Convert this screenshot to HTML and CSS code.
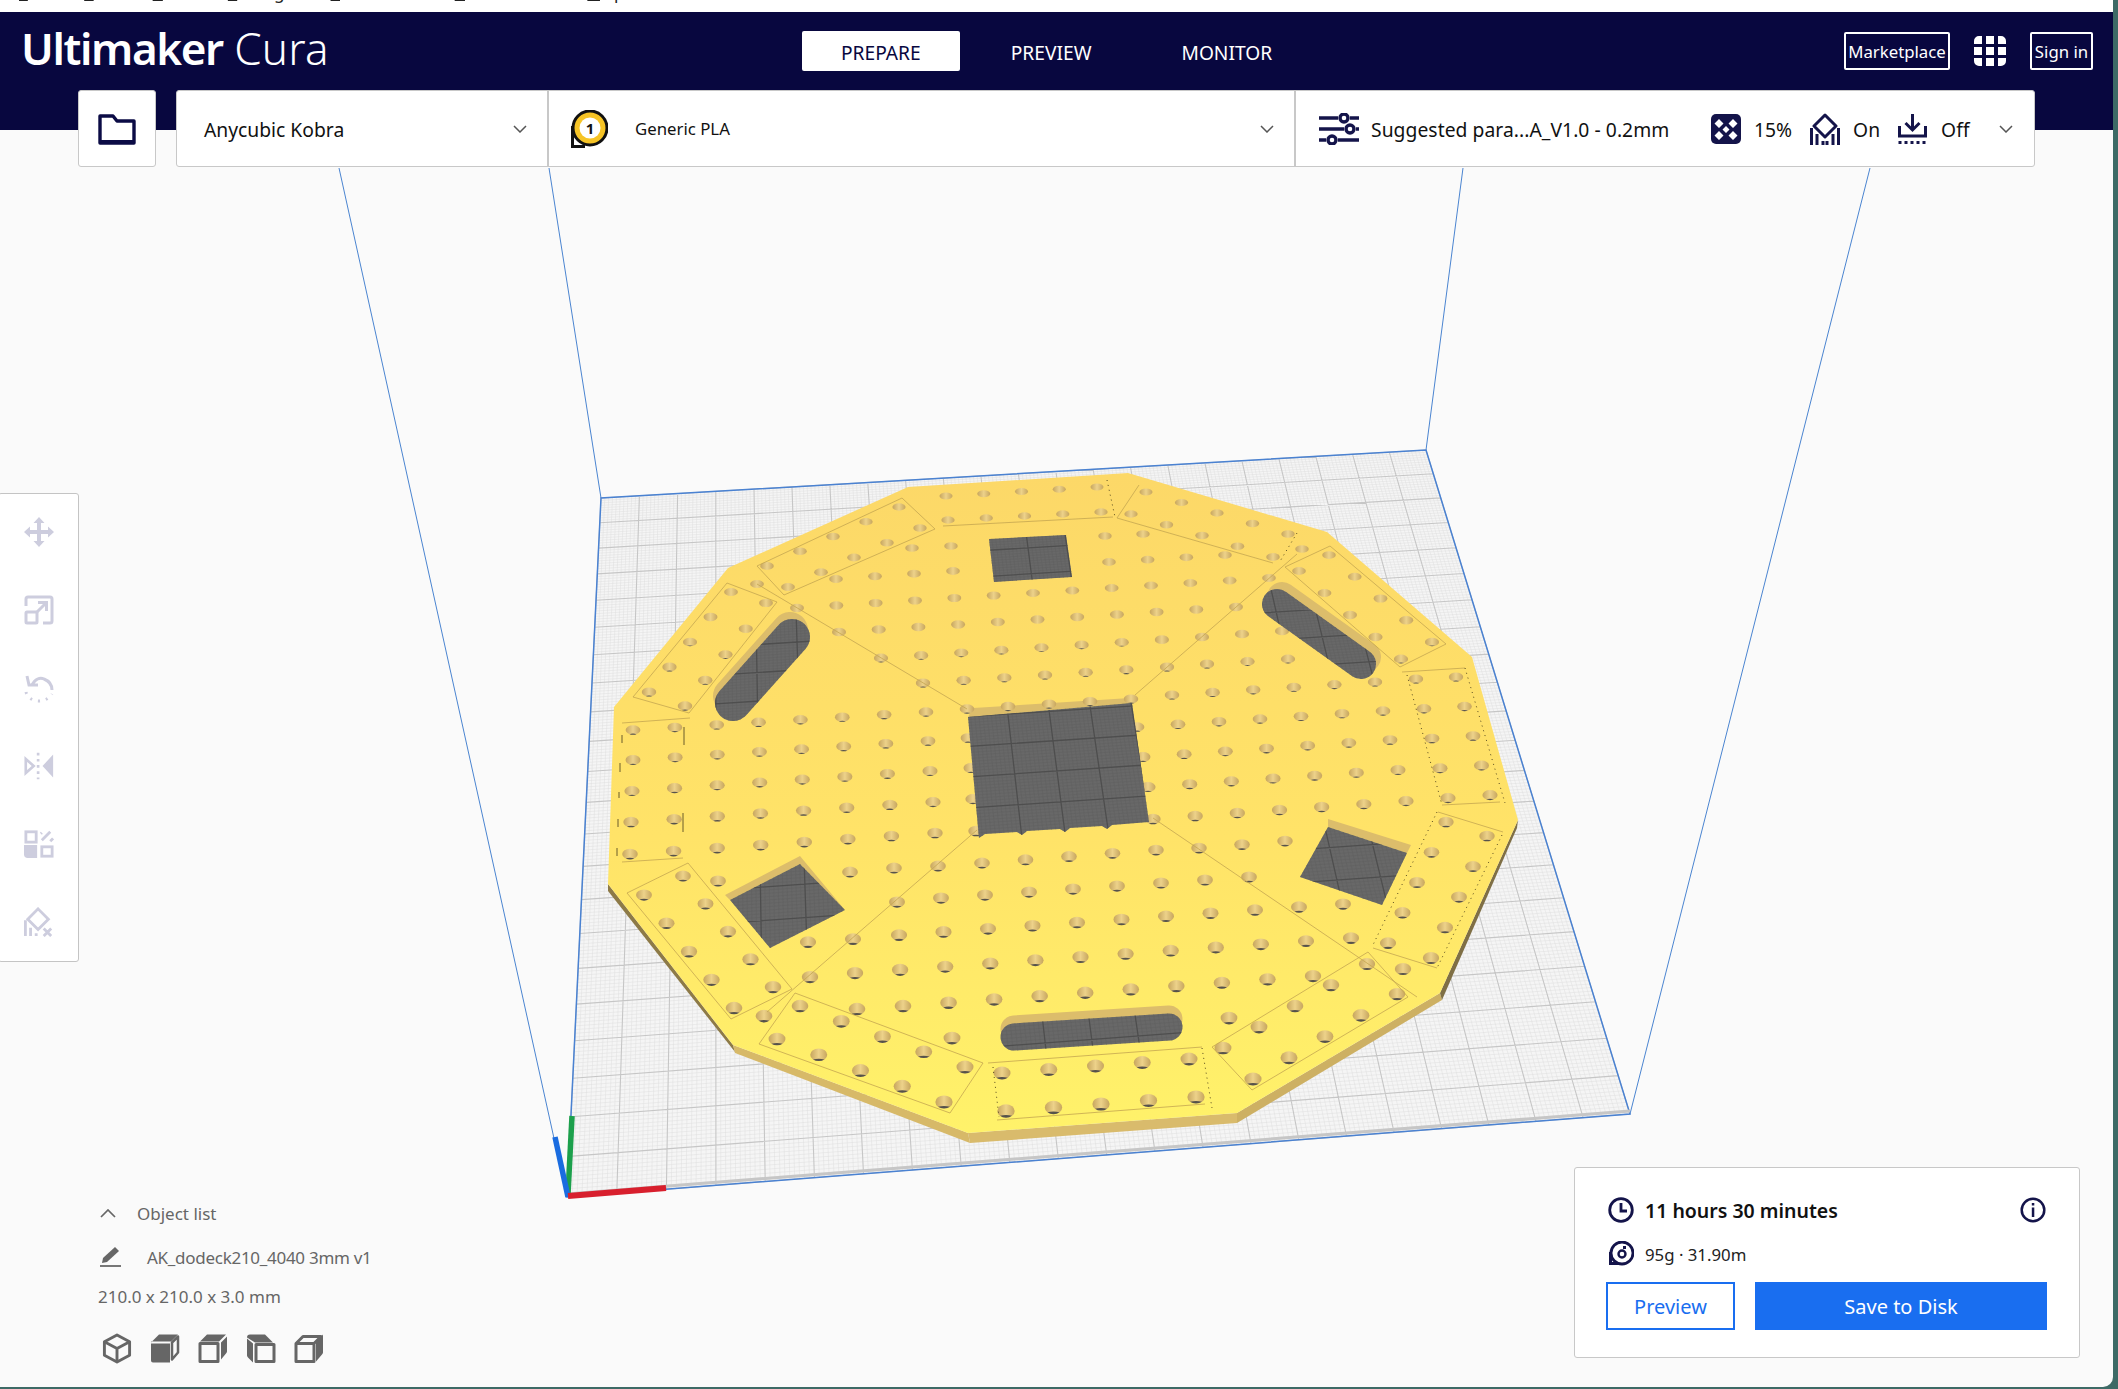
FILE: index.html
```html
<!DOCTYPE html>
<html lang="en">
<head>
  <meta charset="UTF-8">
  <title>Ultimaker Cura</title>
  <link rel="stylesheet" href="styles.css">
</head>
<body>
  <div class="app">
    <svg id="scene" class="scene" viewBox="0 0 2113 1387"></svg>

    <nav class="menu">
      <span><u>F</u>ile</span>
      <span><u>E</u>dit</span>
      <span><u>V</u>iew</span>
      <span><u>S</u>ettings</span>
      <span><u>E</u>xtensions</span>
      <span><u>P</u>references</span>
      <span><u>H</u>elp</span>
    </nav>

    <header class="topbar">
      <div class="topbar-row">
        <div class="logo"><b>Ultimaker</b> <i>Cura</i></div>
        <div class="tabs">
          <button class="tab active">PREPARE</button>
          <button class="tab">PREVIEW</button>
          <button class="tab">MONITOR</button>
        </div>
        <div class="account">
          <button class="outline-btn market">Marketplace</button>
          <svg class="apps" viewBox="0 0 32 30">
            <path fill="#fff" d="M0 5a5 5 0 0 1 5-5h3v8H0zM12 0h8v8h-8zM24 0h3a5 5 0 0 1 5 5v3h-8zM0 11h8v8H0zM12 11h8v8h-8zM24 11h8v8h-8zM0 22h8v8H5a5 5 0 0 1-5-5zM12 22h8v8h-8zM24 22h8v3a5 5 0 0 1-5 5h-3z"/>
          </svg>
          <button class="outline-btn signin">Sign in</button>
        </div>
      </div>

      <div class="toolbar">
        <button class="open-btn">
          <svg class="folder" viewBox="0 0 38 32">
            <path fill="none" stroke="#0b0b45" stroke-width="3.4" stroke-linejoin="round" d="M2 3h13l4 5h17v22H2z"/>
            <path fill="#0b0b45" d="M2 27h34v4H2z"/>
          </svg>
        </button>
        <div class="stage-menu">
          <div class="cell printer">
            <span>Anycubic Kobra</span>
            <svg class="chev" viewBox="0 0 14 8"><path d="M1 1l6 6 6-6"/></svg>
          </div>
          <div class="cell material">
            <svg class="badge" viewBox="0 0 38 38">
              <circle cx="20" cy="18" r="17" fill="#f6c426" stroke="#111" stroke-width="3"/>
              <circle cx="20" cy="18" r="10.5" fill="#fff"/>
              <path fill="#111" d="M1 38V16h3v22z"/>
              <path fill="#111" d="M1 35h14v3H1z"/>
              <text x="20" y="23.5" class="badge-num">1</text>
            </svg>
            <span>Generic PLA</span>
            <svg class="chev" viewBox="0 0 14 8"><path d="M1 1l6 6 6-6"/></svg>
          </div>
          <div class="cell settings">
            <svg class="ic-sliders" viewBox="0 0 40 32">
              <g fill="none" stroke="#14144a" stroke-width="3.4">
                <path d="M0 5h19M31 5h9M0 16h25M37 16h3M0 27h7M19 27h21"/>
                <circle cx="25" cy="5" r="4"/>
                <circle cx="31" cy="16" r="4"/>
                <circle cx="13" cy="27" r="4"/>
              </g>
            </svg>
            <span class="profile">Suggested para...A_V1.0 - 0.2mm</span>
            <svg class="ic-infill" viewBox="0 0 30 30">
              <rect width="30" height="30" rx="5" fill="#14144a"/>
              <path fill="#fff" d="M15 12l3.500 3.500-3.500 3.500-3.500-3.500zM8 5l4.500 4.500L8 14l-4.500-4.500zM22 5l4.500 4.500L22 14l-4.500-4.500zM8 17l4.500 4.500L8 26l-4.500-4.500zM22 17l4.500 4.500L22 26l-4.500-4.500z"/>
            </svg>
            <span class="val val-pct">15%</span>
            <svg class="ic-support" viewBox="0 0 30 32">
              <path fill="none" stroke="#14144a" stroke-width="3" stroke-linejoin="round" d="M15 2l11 11-11 11L4 13z"/>
              <path fill="none" stroke="#14144a" stroke-width="3" d="M1.500 32V15M7 32V21M13 32v-4M17 32v-4M23 32V21M28.500 32V15"/>
            </svg>
            <span class="val val-on">On</span>
            <svg class="ic-adhesion" viewBox="0 0 30 30">
              <path fill="none" stroke="#14144a" stroke-width="3" d="M15 0v15M8 9l7 7 7-7M2 12v10h26V12"/>
              <path fill="none" stroke="#14144a" stroke-width="3" stroke-dasharray="3 3" d="M1 28.500h28"/>
            </svg>
            <span class="val val-off">Off</span>
            <svg class="chev" viewBox="0 0 14 8"><path d="M1 1l6 6 6-6"/></svg>
          </div>
        </div>
      </div>
    </header>

    <aside class="tools">
      <svg class="tool" viewBox="0 0 30 30"><path d="M15 0l5.500 6H17v7h7V9.500l6 5.500-6 5.500V17h-7v7h3.500L15 30l-5.500-6H13v-7H6v3.500L0 15l6-5.500V13h7V6H9.500z"/></svg>
      <svg class="tool" viewBox="0 0 30 30">
        <g class="tool-line">
          <path d="M2 11V4a2 2 0 0 1 2-2h22a2 2 0 0 1 2 2v22a2 2 0 0 1-2 2h-7"/>
          <rect x="2" y="17" width="11" height="11" rx="1"/>
          <path d="M12 18l10-10M14 7.500h8.500V16"/>
        </g>
      </svg>
      <svg class="tool" viewBox="0 0 30 30">
        <g class="tool-line">
          <path d="M8 12C11 6 16 4 20 6c5 2 8 6 8 11"/>
          <path d="M3 3l2 9h9"/>
          <path stroke-dasharray="2 6" d="M2 19c1 5 6 9 13 9s11-4 13-7"/>
        </g>
      </svg>
      <svg class="tool" viewBox="0 0 34 30">
        <path class="tool-line" d="M2 7l9 8-9 8z"/>
        <path d="M33 2v26L21 15z"/>
        <path class="tool-line" stroke-dasharray="3 4" d="M16 0v30"/>
      </svg>
      <svg class="tool" viewBox="0 0 32 30">
        <rect class="tool-line" x="2" y="2" width="11" height="11"/>
        <path class="tool-line" d="M19 11l9-9M19 3l-1 1M28 12l3-3"/>
        <path d="M0 16h14v14H4a4 4 0 0 1-4-4z"/>
        <rect class="tool-line" x="19" y="18" width="11" height="10"/>
      </svg>
      <svg class="tool" viewBox="0 0 32 32">
        <path class="tool-line" d="M15 2l11 11-11 11L4 13z"/>
        <path class="tool-line" d="M1.500 31V14M7 31v-9M13 31v-3"/>
        <path class="tool-line" d="M21 23l8 8M29 23l-8 8"/>
      </svg>
    </aside>

    <section class="objects">
      <div class="obj-row obj-head">
        <svg class="obj-chev" viewBox="0 0 16 9"><path d="M1 8l7-7 7 7"/></svg>
        <span>Object list</span>
      </div>
      <div class="obj-row obj-name">
        <svg class="obj-pencil" viewBox="0 0 22 21">
          <path fill="#666" d="M15 0l4 4L7 15l-5 1 1-5z"/>
          <path fill="#777" d="M0 18h21v2H0z"/>
        </svg>
        <span>AK_dodeck210_4040 3mm v1</span>
      </div>
      <div class="obj-size">210.0 x 210.0 x 3.0 mm</div>
      <div class="views">
        <svg class="view" viewBox="0 0 30 32">
          <g fill="none" stroke="#666" stroke-width="3" stroke-linejoin="round">
            <path d="M15 2l13 7v14l-13 7-13-7V9z"/>
            <path d="M2 9l13 7 13-7M15 16v14"/>
          </g>
        </svg>
        <svg class="view" viewBox="0 0 30 30">
          <path fill="#666" d="M1 9l8-8h19l-7 7H1zM1 10h19v19H3a2 2 0 0 1-2-2z"/>
          <path fill="none" stroke="#666" stroke-width="2.500" stroke-linejoin="round" d="M22 9l6-6v16l-6 7z"/>
        </svg>
        <svg class="view" viewBox="0 0 30 30">
          <path fill="none" stroke="#666" stroke-width="3" stroke-linejoin="round" d="M2 10h18v18H2z"/>
          <path fill="#666" d="M2 8l7-7h19l-7 7zM23 9l6-6v15a3 3 0 0 1-1 2l-5 6z"/>
        </svg>
        <svg class="view" viewBox="0 0 30 30">
          <path fill="none" stroke="#666" stroke-width="3" stroke-linejoin="round" d="M10 11h18v17H10z"/>
          <path fill="#666" d="M1 4a3 3 0 0 1 3-3h15l8 8H9zM7 10v19l-5-5a3 3 0 0 1-1-2V5z"/>
        </svg>
        <svg class="view" viewBox="0 0 30 30">
          <path fill="none" stroke="#666" stroke-width="3" stroke-linejoin="round" d="M2 10h18v18H2zM2 10l7-7h18l-7 7"/>
          <path fill="#666" d="M22 9l7-8v18a3 3 0 0 1-1 2l-6 7z"/>
        </svg>
      </div>
    </section>

    <section class="action">
      <div class="action-row time">
        <svg class="ic" viewBox="0 0 26 26">
          <circle cx="13" cy="13" r="11.300" fill="none" stroke="#14144a" stroke-width="2.800"/>
          <path fill="none" stroke="#14144a" stroke-width="2.800" d="M13 6v8h6"/>
        </svg>
        <span>11 hours 30 minutes</span>
        <svg class="ic info" viewBox="0 0 26 26">
          <circle cx="13" cy="13" r="11.300" fill="none" stroke="#14144a" stroke-width="2.500"/>
          <path fill="#14144a" d="M11.800 10.500h2.500V20h-2.500zM11.800 6h2.500v2.500h-2.500z"/>
        </svg>
      </div>
      <div class="action-row usage">
        <svg class="ic" viewBox="0 0 26 26">
          <circle cx="14" cy="12" r="11" fill="none" stroke="#14144a" stroke-width="2.800"/>
          <circle cx="14" cy="13" r="3.500" fill="none" stroke="#14144a" stroke-width="2.400"/>
          <path fill="#14144a" d="M1 24V11h3v10h7v3zM15 5h3v3h-3z"/>
        </svg>
        <span>95g · 31.90m</span>
      </div>
      <div class="action-btns">
        <button class="btn-preview">Preview</button>
        <button class="btn-save">Save to Disk</button>
      </div>
    </section>
  </div>
  <script src="scene.js"></script>
</body>
</html>
```

FILE: styles.css
```css
* {
  box-sizing: border-box;
}
body {
  margin: 0;
  background: #3d6a66;
  font-family: "Noto Sans", sans-serif;
}
button {
  font-family: inherit;
  cursor: pointer;
}
.app {
  position: relative;
  width: 2113px;
  height: 1387px;
  background: #fafafa;
  overflow: hidden;
  border-bottom-right-radius: 10px;
}
.scene {
  position: absolute;
  left: 0;
  top: 0;
  width: 2113px;
  height: 1387px;
}

/* window menu, cut off by the top of the shot */
.menu {
  position: relative;
  height: 12px;
  background: #fff;
  overflow: hidden;
  display: flex;
  gap: 38px;
  padding-left: 19px;
  font-size: 17px;
  line-height: 12px;
  color: #222;
}
.menu span {
  margin-top: -13px;
  white-space: nowrap;
}

.topbar {
  position: relative;
  height: 118px;
  background: #08073f;
}
.topbar-row {
  display: flex;
  height: 78px;
  padding-right: 20px;
}
.logo {
  width: 802px;
  padding: 6px 0 0 21px;
  font-size: 44px;
  line-height: 60px;
  color: #fff;
  white-space: nowrap;
}
.logo b {
  font-weight: 600;
  letter-spacing: -1.4px;
}
.logo i {
  font-style: normal;
  font-weight: 300;
  letter-spacing: 0.2px;
}
.tabs {
  display: flex;
  gap: 12px;
  padding-top: 19px;
}
.tab {
  height: 40px;
  padding: 2px 39px 0;
  border: 0;
  border-radius: 2px;
  background: transparent;
  color: #fff;
  font-size: 19.2px;
}
.tab.active {
  background: #fff;
  color: #08073f;
}
.account {
  display: flex;
  align-items: flex-start;
  gap: 24px;
  margin-left: auto;
  padding-top: 20px;
}
.outline-btn {
  height: 38px;
  padding: 0;
  border: 2px solid #fff;
  border-radius: 2px;
  background: transparent;
  color: #fff;
  font-size: 16.8px;
}
.market {
  width: 106px;
}
.signin {
  width: 63px;
}
.apps {
  width: 32px;
  height: 30px;
  margin-top: 4px;
}

.toolbar {
  display: flex;
  gap: 20px;
  padding-left: 78px;
  height: 77px;
}
.open-btn {
  width: 78px;
  height: 77px;
  padding: 0;
  border: 1.5px solid #c8c8c8;
  border-radius: 3px;
  background: #fff;
  display: flex;
  align-items: center;
  justify-content: center;
}
.folder {
  width: 38px;
  height: 32px;
}
.stage-menu {
  display: flex;
  width: 1859px;
  height: 77px;
  background: #fff;
  border: 1.5px solid #c8c8c8;
  border-radius: 3px;
  color: #111;
  font-size: 19.3px;
}
.cell {
  display: flex;
  align-items: center;
  white-space: nowrap;
}
.cell + .cell {
  border-left: 2px solid #c8c8c8;
}
.chev {
  width: 14px;
  height: 8px;
  fill: none;
  stroke: #555;
  stroke-width: 1.5;
}
.printer {
  width: 370px;
  padding-left: 27px;
}
.printer span,
.settings span {
  margin-top: 2px;
}
.printer .chev {
  margin-left: auto;
  margin-right: 20px;
}
.material {
  width: 747px;
  padding-left: 21px;
}
.badge {
  width: 38px;
  height: 38px;
}
.badge-num {
  font-size: 15px;
  font-weight: 700;
  text-anchor: middle;
  fill: #111;
}
.material span {
  margin-left: 27px;
  font-size: 16.8px;
}
.material .chev {
  margin-left: auto;
  margin-right: 20px;
}
.settings {
  flex: 1;
  padding-left: 23px;
}
.ic-sliders {
  width: 40px;
  height: 32px;
}
.profile {
  margin-left: 12px;
  width: 340px;
  letter-spacing: 0.05px;
}
.ic-infill {
  width: 30px;
  height: 30px;
}
.ic-support {
  width: 30px;
  height: 32px;
  margin-left: 18px;
}
.ic-adhesion {
  width: 31px;
  height: 30px;
  margin-left: 17px;
}
.val-pct {
  margin-left: 13px;
}
.val-on {
  margin-left: 13px;
}
.val-off {
  margin-left: 13px;
}
.settings .chev {
  margin-left: 30px;
}

/* floating panels over the build plate */
.tools {
  position: absolute;
  left: -2px;
  top: 493px;
  width: 81px;
  height: 469px;
  padding: 23px 0 24px;
  background: #fff;
  border: 1.5px solid #c4c4c4;
  border-radius: 3px;
  display: flex;
  flex-direction: column;
  align-items: center;
  justify-content: space-between;
}
.tool {
  width: 30px;
  height: 30px;
  fill: #cdcdde;
}
.tool-line {
  fill: none;
  stroke: #cdcdde;
  stroke-width: 3;
}

.objects {
  position: absolute;
  left: 98px;
  top: 1200px;
  width: 300px;
  color: #666;
  font-size: 17px;
}
.obj-row {
  display: flex;
  align-items: center;
  height: 26px;
}
.obj-chev {
  width: 16px;
  height: 9px;
  margin-left: 2px;
  fill: none;
  stroke: #666;
  stroke-width: 1.7;
}
.obj-head span {
  margin-left: 21px;
}
.obj-name {
  margin-top: 18px;
}
.obj-pencil {
  width: 22px;
  height: 21px;
  margin-left: 2px;
}
.obj-name span {
  margin-left: 25px;
  letter-spacing: -0.28px;
}
.obj-size {
  margin-top: 14px;
  line-height: 26px;
}
.views {
  display: flex;
  gap: 18px;
  margin: 23px 0 0 4px;
}
.view {
  width: 30px;
  height: 31px;
}

.action {
  position: absolute;
  left: 1574px;
  top: 1167px;
  width: 506px;
  height: 191px;
  padding: 28px 31px 0 31px;
  background: #fff;
  border: 1.5px solid #c8c8c8;
  border-radius: 3px;
}
.action-row {
  display: flex;
  align-items: center;
  height: 28px;
  padding: 0 2px 0 2px;
  gap: 11px;
}
.time {
  font-size: 19.5px;
  font-weight: 600;
  color: #111;
}
.usage {
  margin-top: 16px;
  font-size: 16.8px;
  color: #222;
}
.ic {
  width: 26px;
  height: 26px;
}
.info {
  margin-left: auto;
}
.action-btns {
  display: flex;
  gap: 20px;
  margin-top: 14px;
}
.btn-preview,
.btn-save {
  height: 48px;
  font-size: 20px;
  border-radius: 0;
}
.btn-preview {
  width: 129px;
  background: #fff;
  border: 2px solid #196ef0;
  color: #196ef0;
}
.btn-save {
  width: 292px;
  background: #196ef0;
  border: 0;
  color: #fff;
}
```

FILE: scene.js
```js
// Build plate and printed part, in screen pixels.
const BED = [[567, 1197], [1630, 1114], [1426, 450], [601, 498]];

function homography(q) {
  const [[x0, y0], [x1, y1], [x2, y2], [x3, y3]] = q;
  const dx1 = x1 - x2, dx2 = x3 - x2, sx = x0 - x1 + x2 - x3;
  const dy1 = y1 - y2, dy2 = y3 - y2, sy = y0 - y1 + y2 - y3;
  const det = dx1 * dy2 - dx2 * dy1;
  const g = (sx * dy2 - dx2 * sy) / det;
  const h = (dx1 * sy - sx * dy1) / det;
  const a = x1 - x0 + g * x1, b = x3 - x0 + h * x3;
  const d = y1 - y0 + g * y1, e = y3 - y0 + h * y3;
  return (u, v) => {
    const w = g * u + h * v + 1;
    return [(a * u + b * v + x0) / w, (d * u + e * v + y0) / w];
  };
}
const project = homography(BED);

function gridPath(test) {
  let d = '';
  for (let i = 0; i <= 220; i++) {
    if (!test(i)) continue;
    const t = i / 220;
    const a = project(t, 0), b = project(t, 1), c = project(0, t), e = project(1, t);
    d += `M${a[0].toFixed(1)} ${a[1].toFixed(1)}L${b[0].toFixed(1)} ${b[1].toFixed(1)}`;
    d += `M${c[0].toFixed(1)} ${c[1].toFixed(1)}L${e[0].toFixed(1)} ${e[1].toFixed(1)}`;
  }
  return d;
}
const fineGrid = gridPath(i => i % 10 !== 0);
const majorGrid = gridPath(i => i % 10 === 0);

const pts = a => a.map(p => p.join(',')).join(' ');

// evenly spaced holes between two end holes
const holes = [];
function row(x0, y0, x1, y1, n) {
  for (let i = 0; i < n; i++) {
    const t = n > 1 ? i / (n - 1) : 0;
    holes.push([x0 + (x1 - x0) * t, y0 + (y1 - y0) * t]);
  }
}
function single(...list) {
  list.forEach(p => holes.push(p));
}

// left panel
row(633, 730, 926, 712, 8);
row(633, 760, 928, 741, 8);
row(632, 791, 930, 771, 8);
row(631, 822, 933, 802, 8);
row(630, 854, 935, 833, 8);
single([968, 738], [971, 768], [973, 799], [976, 831]);
single([718, 881], [850, 872], [894, 868], [938, 866], [897, 902], [808, 942], [853, 939], [810, 977]);
// top panel
row(967, 709, 1131, 699, 5);
row(923, 683, 1167, 667, 7);
row(881, 658, 1202, 637, 9);
row(839, 632, 1236, 607, 11);
row(797, 608, 1269, 578, 13);
row(836, 579, 953, 571, 4);
row(1109, 562, 1225, 555, 4);
single([912, 548], [951, 546], [1105, 536], [1143, 534]);
// right panel
row(1242, 634, 1282, 631, 2);
row(1207, 664, 1288, 659, 3);
row(1172, 695, 1375, 682, 6);
row(1137, 727, 1383, 711, 7);
row(1143, 757, 1390, 740, 7);
row(1148, 787, 1398, 770, 7);
row(1153, 819, 1406, 801, 7);
row(1199, 848, 1285, 841, 3);
single([1249, 877], [1299, 907], [1343, 904], [1351, 938], [1403, 969]);
// bottom panel
row(982, 863, 1156, 850, 5);
row(941, 898, 1205, 880, 7);
row(899, 935, 1255, 910, 9);
row(855, 973, 1306, 941, 11);
row(903, 1006, 1313, 976, 10);
single([857, 1009], [952, 1038], [1229, 1018]);
// edge strips, two rows of five
[
  [946, 496, 1097, 487], [948, 520, 1101, 512],
  [1146, 492, 1288, 534], [1131, 514, 1273, 557],
  [899, 507, 767, 566], [920, 528, 788, 587],
  [731, 592, 649, 692], [766, 603, 685, 706],
  [1329, 555, 1432, 642], [1299, 571, 1401, 659],
  [1416, 679, 1448, 798], [1456, 677, 1490, 795],
  [1446, 822, 1388, 943], [1487, 836, 1431, 958],
  [1367, 964, 1223, 1048], [1397, 994, 1253, 1079],
  [1002, 1073, 1189, 1059], [1006, 1111, 1196, 1097],
  [800, 1006, 965, 1067], [777, 1039, 944, 1102],
  [683, 876, 773, 987], [644, 895, 734, 1008]
].forEach(r => row(r[0], r[1], r[2], r[3], 5));
single([757, 584], [1302, 549], [764, 1016]);

function holeSvg([x, y]) {
  const k = (y - 480) / 640;
  const rx = 6.5 + 2.2 * k;
  const ry = 3.5 + 3.2 * k;
  let out = `<ellipse cx="${x}" cy="${y}" rx="${rx}" ry="${ry}" fill="url(#holeFill)"/>`;
  // the floor of the hole only shows from the front half of the plate
  if (k > 0.25) {
    const w = rx * (0.35 + 0.35 * k), h = ry * Math.sqrt(1 - (w / rx) ** 2);
    out += `<path d="M${x - w} ${y + h}A${rx} ${ry} 0 0 0 ${x + w} ${y + h}Q${x} ${y + ry * (0.75 - 0.3 * k)} ${x - w} ${y + h}Z" fill="#56524a"/>`;
  }
  return out;
}

// stadium shaped slot between two points
function slot(x1, y1, x2, y2, r, ox = 0, oy = 0) {
  const len = Math.hypot(x2 - x1, y2 - y1);
  const nx = -(y2 - y1) / len * r, ny = (x2 - x1) / len * r;
  x1 += ox; x2 += ox; y1 += oy; y2 += oy;
  return `M${x1 + nx} ${y1 + ny}L${x2 + nx} ${y2 + ny}A${r} ${r} 0 0 0 ${x2 - nx} ${y2 - ny}L${x1 - nx} ${y1 - ny}A${r} ${r} 0 0 0 ${x1 + nx} ${y1 + ny}Z`;
}

const plate = [[908, 487], [1128, 473], [1327, 532], [1472, 657], [1518, 820], [1440, 993], [1237, 1113], [968, 1133], [733, 1045], [608, 884], [614, 707], [728, 568]];

const sides = [
  [[[608, 884], [733, 1045], [735, 1052], [608, 891]], '#8d7a47'],
  [[[733, 1045], [968, 1133], [970, 1143], [735, 1053]], '#d7b968'],
  [[[968, 1133], [1237, 1113], [1237, 1123], [970, 1143]], '#d9bb6c'],
  [[[1237, 1113], [1440, 993], [1442, 1000], [1237, 1123]], '#cdb063'],
  [[[1440, 993], [1518, 820], [1517, 828], [1442, 1000]], '#7f6f45']
];

const central = 'M968 717L1132 703L1149 822L1112 825L1107 829L1102 826L1070 828L1065 832L1060 829L1027 831L1022 835L1017 832L985 834L979 838Z';
const topSquare = 'M989 539L1066 535L1072 577L994 582Z';
const squareBL = 'M800 864L845 910L770 948L730 900Z';
const squareR = 'M1328 827L1407 853L1382 905L1300 877Z';
const slots = [
  [733, 703, 792, 637, 18, -2, -7],
  [1277, 604, 1361, 664, 15, 5, -7],
  [1014, 1037, 1169, 1027, 13.500, 0, -8]
];
const slotPaths = slots.map(s => slot(s[0], s[1], s[2], s[3], s[4])).join('');
const cutouts = central + topSquare + squareBL + squareR + slotPaths;

const walls = [
  [[973, 708], [1130, 698], [1132, 703], [968, 717]],
  [[800, 856], [845, 910], [800, 864], [730, 900], [725, 895]],
  [[1328, 819], [1411, 845], [1407, 853], [1328, 827]]
];

// panel seams on the part
const seams = [
  [[727, 583], [777, 602], [689, 713], [633, 697], [727, 583]],
  [[902, 498], [935, 529], [784, 595], [757, 566], [902, 498]],
  [[757, 584], [967, 709]],
  [[943, 526], [1113, 517]],
  [[1139, 485], [1117, 518]],
  [[1117, 518], [1273, 563]],
  [[1297, 554], [1135, 695]],
  [[1285, 567], [1330, 546], [1446, 644], [1400, 667], [1285, 567]],
  [[1402, 672], [1465, 668]],
  [[1442, 805], [1500, 802]],
  [[1438, 812], [1503, 832]],
  [[1373, 948], [1437, 968]],
  [[1153, 818], [1417, 997]],
  [[1368, 952], [1408, 997], [1252, 1090], [1212, 1047], [1368, 952]],
  [[1202, 1047], [988, 1063]],
  [[1205, 1104], [997, 1120]],
  [[795, 993], [983, 1063]],
  [[950, 1113], [759, 1044], [795, 993]],
  [[983, 1063], [950, 1113]],
  [[977, 830], [767, 1012]],
  [[688, 863], [792, 989], [731, 1019], [627, 893], [688, 863]],
  [[622, 862], [683, 858]],
  [[622, 723], [690, 718]]
];
const dotted = [
  [[1107, 480], [1115, 517]],
  [[1297, 533], [1279, 563]],
  [[1407, 675], [1442, 805]],
  [[1465, 668], [1505, 803]],
  [[1437, 812], [1372, 947]],
  [[1502, 835], [1437, 968]],
  [[1202, 1048], [1212, 1108]],
  [[993, 1067], [999, 1117]]
];
const ticks = [
  [622, 735, 743], [684, 727, 745], [620, 763, 772], [619, 792, 798],
  [618, 819, 827], [683, 813, 832], [617, 848, 856]
];

const line = (a, b) => `<line x1="${a[0]}" y1="${a[1]}" x2="${b[0]}" y2="${b[1]}"/>`;

document.getElementById('scene').innerHTML = `
  <defs>
    <linearGradient id="plateFill" gradientUnits="userSpaceOnUse" x1="0" y1="473" x2="0" y2="1133">
      <stop offset="0" stop-color="#fcd868"/>
      <stop offset="0.55" stop-color="#ffe368"/>
      <stop offset="1" stop-color="#fff26a"/>
    </linearGradient>
    <linearGradient id="holeFill">
      <stop offset="0" stop-color="#c6a55e"/>
      <stop offset="0.5" stop-color="#edd28a"/>
      <stop offset="1" stop-color="#c6a55e"/>
    </linearGradient>
    <clipPath id="cutClip"><path d="${cutouts}"/></clipPath>
  </defs>
  <g stroke="#4a84d0" stroke-width="1">
    ${line([339, 168], [567, 1197])}
    ${line([549, 168], [601, 498])}
    ${line([1463, 168], [1426, 450])}
    ${line([1870, 168], [1630, 1114])}
  </g>
  <polygon points="${pts(BED)}" fill="#f5f5f5"/>
  <path d="${fineGrid}" stroke="#dedede" stroke-width="0.5" fill="none"/>
  <path d="${majorGrid}" stroke="#c6c6c6" stroke-width="1.1" fill="none"/>
  <polygon points="${pts(BED)}" fill="none" stroke="#4a82d2" stroke-width="1.5"/>
  <polyline points="567,1194 1630,1111" fill="none" stroke="#c6c6c6" stroke-width="3"/>
  ${sides.map(s => `<polygon points="${pts(s[0])}" fill="${s[1]}"/>`).join('')}
  <polygon points="${pts(plate)}" fill="url(#plateFill)"/>
  <g fill="#dcbd6b">
    ${walls.map(w => `<polygon points="${pts(w)}"/>`).join('')}
    ${slots.map(s => `<path d="${slot(s[0], s[1], s[2], s[3], s[4], s[5], s[6])}"/>`).join('')}
  </g>
  ${holes.map(holeSvg).join('')}
  <path d="${cutouts}" fill="#686868"/>
  <g clip-path="url(#cutClip)" fill="none">
    <path d="${fineGrid}" stroke="#606060" stroke-width="0.5"/>
    <path d="${majorGrid}" stroke="#4e4e4e" stroke-width="1.3"/>
  </g>
  <g stroke="#c4a650" stroke-width="0.8" fill="none">
    ${seams.map(s => `<polyline points="${pts(s)}"/>`).join('')}
  </g>
  <g stroke="#55481f" stroke-width="1" stroke-dasharray="1 4" fill="none">
    ${dotted.map(s => `<polyline points="${pts(s)}"/>`).join('')}
  </g>
  <g stroke="#6b5c2a" stroke-width="1">
    ${ticks.map(t => line([t[0], t[1]], [t[0], t[2]])).join('')}
  </g>
  <g stroke-width="5.500" stroke-linecap="butt">
    <line x1="568" y1="1194" x2="572" y2="1116" stroke="#1ca04c"/>
    <line x1="568" y1="1197" x2="555" y2="1137" stroke="#1a6ce0"/>
    <line x1="568" y1="1196" x2="666" y2="1188" stroke="#d81f2d" stroke-width="6"/>
  </g>
`;
```
